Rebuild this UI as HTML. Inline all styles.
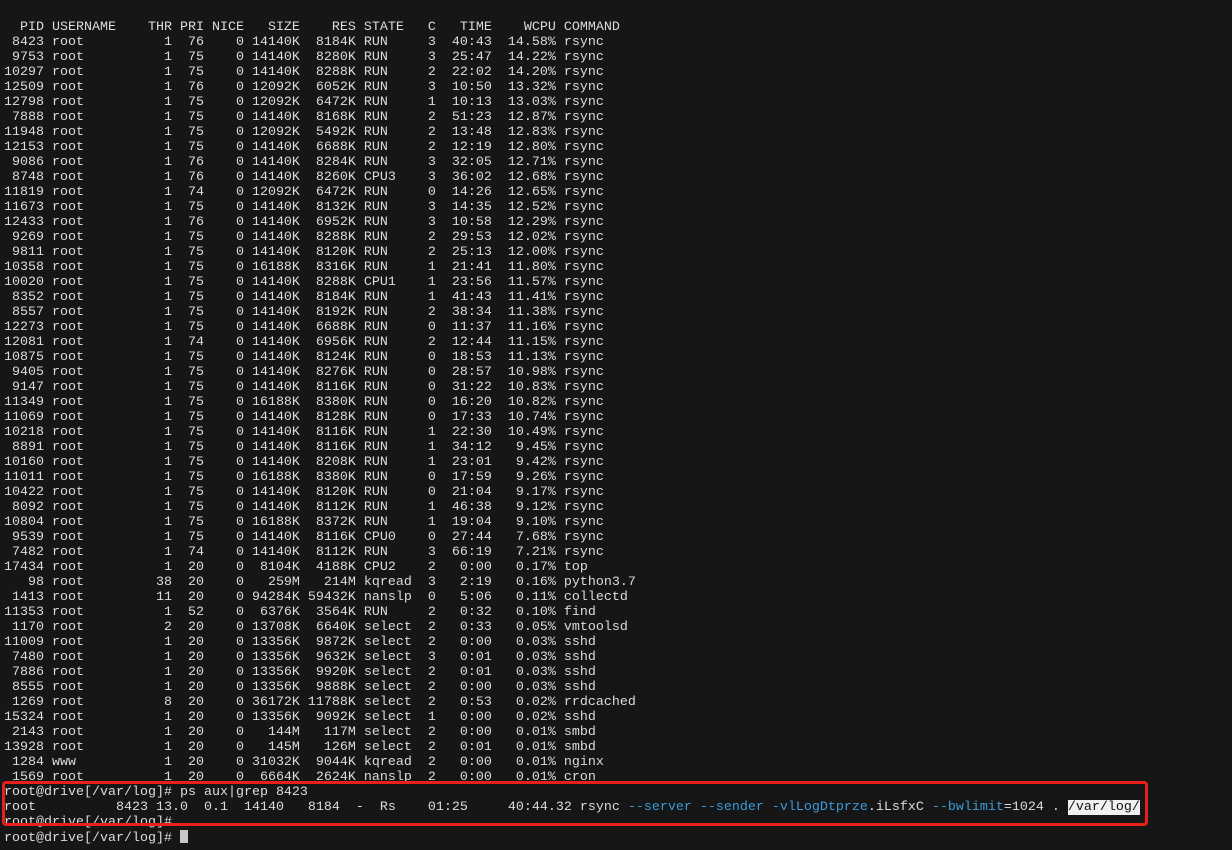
<!DOCTYPE html>
<html><head><meta charset="utf-8"><style>
html,body{margin:0;padding:0;background:#161616;width:1232px;height:850px;overflow:hidden}
pre{position:absolute;left:4px;top:-10px;margin:0;font-family:"Liberation Mono",monospace;font-size:13.33px;line-height:15px;color:#dcdcdc;white-space:pre}
.b{color:#3b9ad9}
.h{background:#f0f0f0;color:#111}
.box{position:absolute;left:2px;top:781px;width:1140px;height:39px;border:3px solid #e8201c;border-radius:4px}
.cur{display:inline-block;width:8px;height:13px;background:#c8c8c8;vertical-align:-2px}
</style></head><body>
<pre id="t"></pre>
<div class="box"></div>
<script>
var rows=[
"8423 root 1 76 0 14140K 8184K RUN 3 40:43 14.58% rsync",
"9753 root 1 75 0 14140K 8280K RUN 3 25:47 14.22% rsync",
"10297 root 1 75 0 14140K 8288K RUN 2 22:02 14.20% rsync",
"12509 root 1 76 0 12092K 6052K RUN 3 10:50 13.32% rsync",
"12798 root 1 75 0 12092K 6472K RUN 1 10:13 13.03% rsync",
"7888 root 1 75 0 14140K 8168K RUN 2 51:23 12.87% rsync",
"11948 root 1 75 0 12092K 5492K RUN 2 13:48 12.83% rsync",
"12153 root 1 75 0 14140K 6688K RUN 2 12:19 12.80% rsync",
"9086 root 1 76 0 14140K 8284K RUN 3 32:05 12.71% rsync",
"8748 root 1 76 0 14140K 8260K CPU3 3 36:02 12.68% rsync",
"11819 root 1 74 0 12092K 6472K RUN 0 14:26 12.65% rsync",
"11673 root 1 75 0 14140K 8132K RUN 3 14:35 12.52% rsync",
"12433 root 1 76 0 14140K 6952K RUN 3 10:58 12.29% rsync",
"9269 root 1 75 0 14140K 8288K RUN 2 29:53 12.02% rsync",
"9811 root 1 75 0 14140K 8120K RUN 2 25:13 12.00% rsync",
"10358 root 1 75 0 16188K 8316K RUN 1 21:41 11.80% rsync",
"10020 root 1 75 0 14140K 8288K CPU1 1 23:56 11.57% rsync",
"8352 root 1 75 0 14140K 8184K RUN 1 41:43 11.41% rsync",
"8557 root 1 75 0 14140K 8192K RUN 2 38:34 11.38% rsync",
"12273 root 1 75 0 14140K 6688K RUN 0 11:37 11.16% rsync",
"12081 root 1 74 0 14140K 6956K RUN 2 12:44 11.15% rsync",
"10875 root 1 75 0 14140K 8124K RUN 0 18:53 11.13% rsync",
"9405 root 1 75 0 14140K 8276K RUN 0 28:57 10.98% rsync",
"9147 root 1 75 0 14140K 8116K RUN 0 31:22 10.83% rsync",
"11349 root 1 75 0 16188K 8380K RUN 0 16:20 10.82% rsync",
"11069 root 1 75 0 14140K 8128K RUN 0 17:33 10.74% rsync",
"10218 root 1 75 0 14140K 8116K RUN 1 22:30 10.49% rsync",
"8891 root 1 75 0 14140K 8116K RUN 1 34:12 9.45% rsync",
"10160 root 1 75 0 14140K 8208K RUN 1 23:01 9.42% rsync",
"11011 root 1 75 0 16188K 8380K RUN 0 17:59 9.26% rsync",
"10422 root 1 75 0 14140K 8120K RUN 0 21:04 9.17% rsync",
"8092 root 1 75 0 14140K 8112K RUN 1 46:38 9.12% rsync",
"10804 root 1 75 0 16188K 8372K RUN 1 19:04 9.10% rsync",
"9539 root 1 75 0 14140K 8116K CPU0 0 27:44 7.68% rsync",
"7482 root 1 74 0 14140K 8112K RUN 3 66:19 7.21% rsync",
"17434 root 1 20 0 8104K 4188K CPU2 2 0:00 0.17% top",
"98 root 38 20 0 259M 214M kqread 3 2:19 0.16% python3.7",
"1413 root 11 20 0 94284K 59432K nanslp 0 5:06 0.11% collectd",
"11353 root 1 52 0 6376K 3564K RUN 2 0:32 0.10% find",
"1170 root 2 20 0 13708K 6640K select 2 0:33 0.05% vmtoolsd",
"11009 root 1 20 0 13356K 9872K select 2 0:00 0.03% sshd",
"7480 root 1 20 0 13356K 9632K select 3 0:01 0.03% sshd",
"7886 root 1 20 0 13356K 9920K select 2 0:01 0.03% sshd",
"8555 root 1 20 0 13356K 9888K select 2 0:00 0.03% sshd",
"1269 root 8 20 0 36172K 11788K select 2 0:53 0.02% rrdcached",
"15324 root 1 20 0 13356K 9092K select 1 0:00 0.02% sshd",
"2143 root 1 20 0 144M 117M select 2 0:00 0.01% smbd",
"13928 root 1 20 0 145M 126M select 2 0:01 0.01% smbd",
"1284 www 1 20 0 31032K 9044K kqread 2 0:00 0.01% nginx",
"1569 root 1 20 0 6664K 2624K nanslp 2 0:00 0.01% cron"];
function L(s,n){return (s+"                    ").slice(0,n)}
function R(s,n){return ("                    "+s).slice(-n)}
var out="\n\n  PID USERNAME    THR PRI NICE   SIZE    RES STATE   C   TIME    WCPU COMMAND\n";
rows.forEach(function(r){var f=r.split(" ");
out+=R(f[0],5)+" "+L(f[1],8)+R(f[2],7)+R(f[3],4)+R(f[4],5)+R(f[5],7)+R(f[6],7)+" "+L(f[7],6)+R(f[8],3)+R(f[9],7)+R(f[10],8)+" "+f[11]+"\n";});
var t=document.getElementById("t");
t.textContent=out;
t.insertAdjacentHTML("beforeend",'root@drive[/var/log]# ps aux|grep 8423\nroot          8423 13.0  0.1  14140   8184  -  Rs    01:25     40:44.32 rsync <span class="b">--server</span> <span class="b">--sender</span> <span class="b">-vlLogDtprze</span>.iLsfxC <span class="b">--bwlimit</span>=1024 . <span class="h">/var/log/</span>\nroot@drive[/var/log]#\nroot@drive[/var/log]# <span class="cur"></span>');
</script>
</body></html>
